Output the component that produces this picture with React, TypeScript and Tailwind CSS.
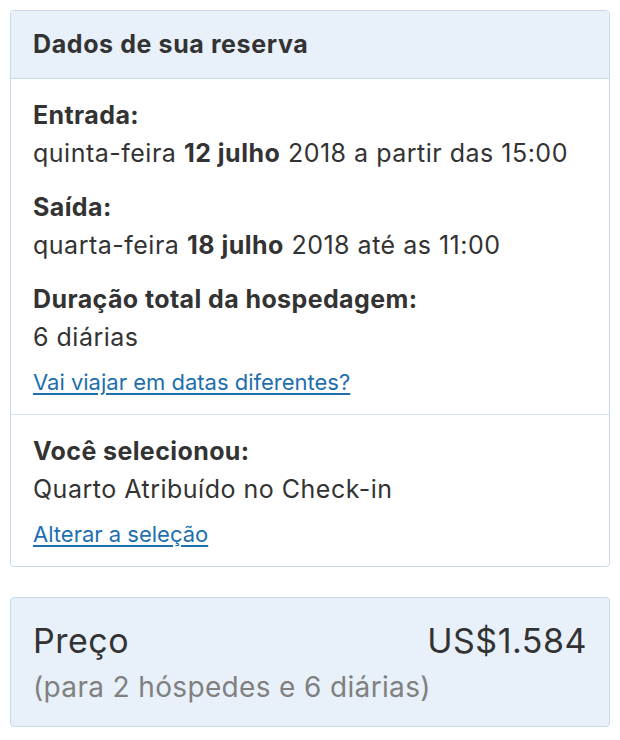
import React from "react";

const font = { fontFamily: "Inter, 'Noto Sans', sans-serif" };

const labelCls = "text-[25px] leading-[38px] font-bold text-[#333333] tracking-[0.4px]";
const valueCls = "text-[25px] leading-[38px] text-[#333333] tracking-[0.5px]";
const linkCls = "block text-[22px] leading-[30px] text-[#1d6fae] underline underline-offset-[3px]";

function Field({ label, children, last }: { label: string; children: React.ReactNode; last?: boolean }) {
  return (
    <div className={last ? "" : "mb-[16px]"}>
      <div className={labelCls}>{label}</div>
      <div className={valueCls}>{children}</div>
    </div>
  );
}

export default function App() {
  return (
    <div className="w-[620px] h-[740px] bg-white pt-[10px] px-[10px]" style={font}>
      <div className="w-[600px] border border-[#c8d9ee] rounded-[4px] overflow-hidden">
        <div className="h-[68px] bg-[#e8f0fa] border-b border-[#c8d9ee] px-[22px] flex items-center">
          <h2 className="text-[25px] font-bold text-[#333333] tracking-[0.6px]">Dados de sua reserva</h2>
        </div>
        <div className="px-[22px] pt-[17px] pb-[17px] border-b border-[#d5e3f2]">
          <Field label="Entrada:">
            quinta-feira <b>12 julho</b> 2018 a partir das 15:00
          </Field>
          <Field label="Saída:">
            quarta-feira <b>18 julho</b> 2018 até as 11:00
          </Field>
          <Field label="Duração total da hospedagem:" last>
            6 diárias
          </Field>
          <a href="#" className={`${linkCls} mt-[11px]`}>
            Vai viajar em datas diferentes?
          </a>
        </div>
        <div className="px-[22px] pt-[17px] pb-[17px]">
          <Field label="Você selecionou:" last>
            Quarto Atribuído no Check-in
          </Field>
          <a href="#" className={`${linkCls} mt-[11px]`}>
            Alterar a seleção
          </a>
        </div>
      </div>
      <div className="mt-[30px] w-[600px] h-[130px] border border-[#c8d9ee] rounded-[4px] bg-[#e8f0fa] px-[22px] pt-[22px]">
        <div className="flex justify-between items-center text-[34px] leading-[42px] text-[#333333] tracking-[0.5px]">
          <span>Preço</span>
          <span>US$1.584</span>
        </div>
        <div className="text-[28px] leading-[34px] text-[#808080] mt-[8px] tracking-[0.35px]">(para 2 hóspedes e 6 diárias)</div>
      </div>
    </div>
  );
}
